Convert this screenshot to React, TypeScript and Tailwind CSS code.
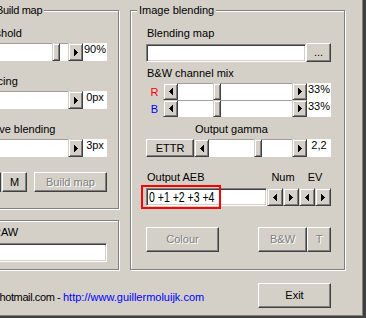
import React from "react";

const etched =
  "border border-[#808080] shadow-[inset_1px_1px_0_#ffffff,1px_1px_0_#ffffff]";
const raised =
  "bg-[#d4d0c8] border border-t-white border-l-white border-r-[#404040] border-b-[#404040] shadow-[inset_-1px_-1px_0_#808080]";
const arrowBtn =
  "bg-[#d4d0c8] border border-t-[#d4d0c8] border-l-[#d4d0c8] border-r-[#404040] border-b-[#404040] shadow-[inset_1px_1px_0_#ffffff,inset_-1px_-1px_0_#808080]";
const sunken =
  "bg-white border border-t-[#808080] border-l-[#808080] border-r-white border-b-white shadow-[inset_1px_1px_0_#404040,inset_-1px_-1px_0_#d4d0c8]";
const disabledText = "text-[#808080] [text-shadow:1px_1px_0_#ffffff]";

function Tri({ dir }: { dir: "left" | "right" }) {
  if (dir === "right") {
    return (
      <svg width="4" height="7" viewBox="0 0 4 7" shapeRendering="crispEdges">
        <rect x="0" y="0" width="1" height="7" fill="#000" />
        <rect x="1" y="1" width="1" height="5" fill="#000" />
        <rect x="2" y="2" width="1" height="3" fill="#000" />
        <rect x="3" y="3" width="1" height="1" fill="#000" />
      </svg>
    );
  }
  return (
    <svg width="4" height="7" viewBox="0 0 4 7" shapeRendering="crispEdges">
      <rect x="3" y="0" width="1" height="7" fill="#000" />
      <rect x="2" y="1" width="1" height="5" fill="#000" />
      <rect x="1" y="2" width="1" height="3" fill="#000" />
      <rect x="0" y="3" width="1" height="1" fill="#000" />
    </svg>
  );
}

function ArrowBtn({ dir, className = "" }: { dir: "left" | "right"; className?: string }) {
  return (
    <div className={`flex items-center justify-center shrink-0 ${arrowBtn} ${className}`}>
      <Tri dir={dir} />
    </div>
  );
}

function ScrollBar({ spacer }: { spacer: string }) {
  return (
    <div className="flex flex-1 min-w-0">
      <ArrowBtn dir="left" className="w-[15px]" />
      <div className="flex flex-1 bg-white shadow-[inset_0_1px_0_#a0a0a0]">
        <div className={`shrink-0 ${spacer}`} />
        <div className={`w-[8px] shrink-0 ${arrowBtn}`} />
      </div>
      <ArrowBtn dir="right" className="w-[15px]" />
    </div>
  );
}

function ValBox({ children }: { children: React.ReactNode }) {
  return <div className="w-[24px] shrink-0 bg-white text-center whitespace-nowrap">{children}</div>;
}

function Btn({
  children,
  className = "",
  disabled = false,
}: {
  children?: React.ReactNode;
  className?: string;
  disabled?: boolean;
}) {
  return (
    <div
      className={`flex items-center justify-center shrink-0 whitespace-nowrap ${raised} ${
        disabled ? disabledText : "text-black"
      } ${className}`}
    >
      {children}
    </div>
  );
}

export default function App() {
  return (
    <div className="font-['Liberation_Sans',Arial,sans-serif] text-[11px] leading-[13px] text-black w-[366px] h-[318px] bg-[#d4d0c8] overflow-hidden relative shadow-[inset_-3px_-2px_0_#404040,inset_-4px_-3px_0_#808080]">
      <div className="flex pt-[10px]">
        {/* Left column */}
        <div className="ml-[-40px] w-[159px] shrink-0 flex flex-col">
          <div className={`relative h-[199px] pl-[12px] pr-[11px] pt-[16px] ${etched}`}>
            <div className="absolute top-[-7px] left-[33px] px-[2px] bg-[#d4d0c8] whitespace-nowrap tracking-[-0.3px]">
              Build map
            </div>
            <div className="whitespace-nowrap">Threshold</div>
            <div className="flex h-[18px] mt-[3px]">
              <ScrollBar spacer="w-[64px]" />
              <ValBox>90%</ValBox>
            </div>
            <div className="mt-[14px] ml-[5px] whitespace-nowrap">Spacing</div>
            <div className="flex h-[18px] mt-[3px]">
              <ScrollBar spacer="w-[0px]" />
              <ValBox>0px</ValBox>
            </div>
            <div className="mt-[14px] ml-[-5px] whitespace-nowrap">Adaptive blending</div>
            <div className="flex h-[18px] mt-[3px]">
              <ScrollBar spacer="w-[0px]" />
              <ValBox>3px</ValBox>
            </div>
            <div className="flex h-[20px] mt-[15px]">
              <Btn className="w-[28px]">C</Btn>
              <Btn className="w-[25px] ml-[1px]">M</Btn>
              <Btn className="w-[73px] ml-[7px]" disabled>
                Build map
              </Btn>
            </div>
          </div>
          <div className={`mt-[11px] h-[50px] pl-[12px] pr-[11px] pt-[5px] ${etched}`}>
            <div className="ml-[20px] whitespace-nowrap">RAW</div>
            <div className={`mt-[4px] h-[19px] ${sunken}`} />
          </div>
        </div>

        {/* Right group */}
        <div className={`relative ml-[11px] w-[215px] h-[260px] shrink-0 pl-[15px] pr-[13px] pt-[16px] ${etched}`}>
          <div className="absolute top-[-7px] left-[6px] px-[2px] bg-[#d4d0c8] whitespace-nowrap">
            Image blending
          </div>
          <div className="pl-[1px]">Blending map</div>
          <div className="flex items-end h-[19px] mt-[3px]">
            <div className={`flex-1 h-[18px] ${sunken}`} />
            <Btn className="w-[25px] h-[19px]">...</Btn>
          </div>
          <div className="mt-[5px] pl-[1px] whitespace-nowrap">B&amp;W channel mix</div>
          <div className="flex h-[17px] mt-[3px]">
            <div className="w-[17px] shrink-0 text-center pt-[3px] text-[#ff0000]">R</div>
            <ScrollBar spacer="w-[35px]" />
            <ValBox>33%</ValBox>
          </div>
          <div className="flex h-[17px]">
            <div className="w-[17px] shrink-0 text-center pt-[3px] text-[#0000ff]">B</div>
            <ScrollBar spacer="w-[35px]" />
            <ValBox>33%</ValBox>
          </div>
          <div className="mt-[6px] pl-[49px] whitespace-nowrap">Output gamma</div>
          <div className="flex h-[18px] mt-[3px]">
            <Btn className="w-[48px]">ETTR</Btn>
            <ScrollBar spacer="w-[45px]" />
            <ValBox>2,2</ValBox>
          </div>
          <div className="flex mt-[14px]">
            <div className="flex-1 pl-[1px] whitespace-nowrap">Output AEB</div>
            <div className="w-[32px] text-center">Num</div>
            <div className="w-[32px] text-center">EV</div>
          </div>
          <div className="relative flex h-[18px] mt-[4px]">
            <div className={`flex-1 pl-[2px] overflow-hidden ${sunken}`}>
              <span className="inline-block origin-left scale-x-75 text-[14px] leading-[16px] whitespace-nowrap">
                0 +1 +2 +3 +4
              </span>
            </div>
            <ArrowBtn dir="left" className="w-[16px]" />
            <ArrowBtn dir="right" className="w-[16px]" />
            <ArrowBtn dir="left" className="w-[16px]" />
            <ArrowBtn dir="right" className="w-[16px]" />
            <div className="absolute left-[-5px] top-[-3px] w-[80px] h-[24px] border-2 border-[#ff0000]" />
          </div>
          <div className="flex h-[25px] mt-[21px]">
            <Btn className="w-[73px]" disabled>
              Colour
            </Btn>
            <div className="flex-1" />
            <Btn className="w-[49px]" disabled>
              B&amp;W
            </Btn>
            <Btn className="w-[24px]" disabled>
              T
            </Btn>
          </div>
        </div>
      </div>

      {/* Footer */}
      <div className="flex mt-[13px]">
        <div className="w-[258px] shrink-0 pt-[8px] flex">
          <div className="w-[63px] shrink-0 flex justify-end whitespace-pre tracking-[-0.4px]">guillermoluijk@hotmail.com - </div>
          <span className="text-[#0000ff] whitespace-nowrap">http://www.guillermoluijk.com</span>
        </div>
        <Btn className="w-[73px] h-[25px]">Exit</Btn>
      </div>
    </div>
  );
}
